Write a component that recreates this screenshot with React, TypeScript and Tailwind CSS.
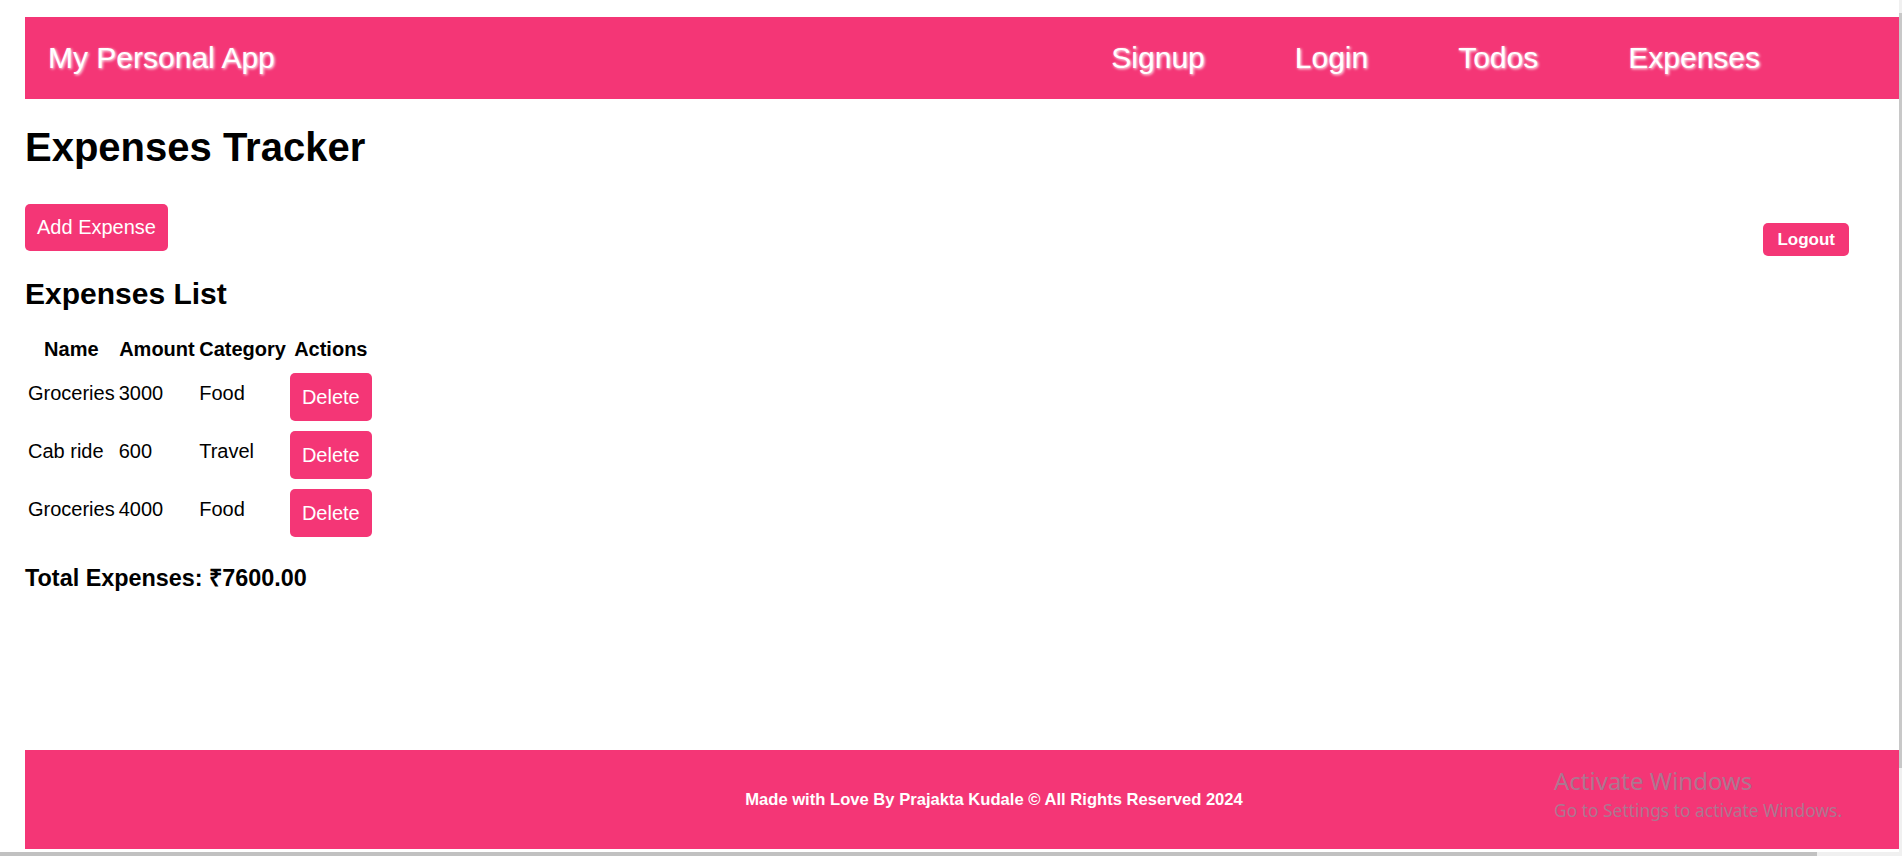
import React from "react";

const rows = [
  { name: "Groceries", amount: "3000", category: "Food" },
  { name: "Cab ride", amount: "600", category: "Travel" },
  { name: "Groceries", amount: "4000", category: "Food" },
];

export default function App() {
  return (
    <div className="relative h-[856px] w-full overflow-hidden bg-white font-['Liberation_Sans',Arial,sans-serif] text-[20px] text-black">
      <div className="pl-[25px] pr-[3px] pt-[17px]">
        <header className="flex h-[82px] items-center bg-[#f43676] pl-[23px] pr-[139px] text-white [text-shadow:1px_1px_3px_#ffffff]">
          <span className="text-[30px] leading-[34px]">My Personal App</span>
          <nav className="ml-auto flex gap-[90px] text-[30px] leading-[34px]">
            <a>Signup</a>
            <a>Login</a>
            <a>Todos</a>
            <a>Expenses</a>
          </nav>
        </header>

        <main className="pr-[50px]">
          <h1 className="mt-[25px] text-[40px] font-bold leading-[46px]">Expenses Tracker</h1>
          <div className="mt-[34px] flex h-[47px] items-start justify-between">
            <button className="rounded-[5px] bg-[#f43676] px-[12px] py-[12px] text-[20px] leading-[23px] text-white">
              Add Expense
            </button>
            <button className="mt-[19px] rounded-[5px] bg-[#f43676] px-[14px] py-[7px] text-[17px] font-bold leading-[19px] text-white">
              Logout
            </button>
          </div>

          <h2 className="mt-[26px] text-[30px] font-bold leading-[34px]">Expenses List</h2>

          <table className="mt-[24px] border-separate border-spacing-[2px]">
            <thead>
              <tr>
                <th className="px-[1px] pt-[1px] pb-[6px] text-center font-bold leading-[23px]">Name</th>
                <th className="w-[78.5px] px-[1px] pt-[1px] pb-[6px] text-center font-bold leading-[23px]">Amount</th>
                <th className="px-[1px] pt-[1px] pb-[6px] text-center font-bold leading-[23px]">Category</th>
                <th className="px-[1px] pt-[1px] pb-[6px] text-center font-bold leading-[23px]">Actions</th>
              </tr>
            </thead>
            <tbody>
              {rows.map((r, i) => (
                <tr key={i}>
                  <td className="px-[1px] pt-[13px] text-left align-top leading-[23px]">{r.name}</td>
                  <td className="px-[1px] pt-[13px] text-left align-top leading-[23px]">{r.amount}</td>
                  <td className="px-[1px] pt-[13px] text-left align-top leading-[23px]">{r.category}</td>
                  <td className="px-[1px] py-[4px] align-top">
                    <button className="block rounded-[5px] bg-[#f43676] px-[12px] py-[12px] text-[20px] leading-[24px] text-white">
                      Delete
                    </button>
                  </td>
                </tr>
              ))}
            </tbody>
          </table>

          <h3 className="mt-[22px] text-[23.4px] font-bold leading-[27px]">Total Expenses: ₹7600.00</h3>
        </main>

        <footer className="mt-[158px] flex h-[99px] items-center justify-center bg-[#f43676] pl-[64px] text-[16.6px] font-bold leading-[19px] text-white">
          Made with Love By Prajakta Kudale © All Rights Reserved 2024
        </footer>
      </div>

      {/* Windows activation watermark */}
      <div className="pointer-events-none absolute left-[1554px] top-[767px] font-['Noto_Sans',sans-serif] text-[#ad7690]">
        <div className="text-[24px] leading-[28px]">Activate Windows</div>
        <div className="mt-[4px] text-[17.4px] leading-[23px]">Go to Settings to activate Windows.</div>
      </div>

      {/* browser scrollbars */}
      <div className="absolute right-0 top-0 flex h-[852px] w-[3px] flex-col bg-[#f0f0f0]">
        <div className="mt-[13px] h-[755px] w-full bg-[#c8c8c8]" />
      </div>
      <div className="absolute bottom-0 left-0 flex h-[4px] w-full bg-[#f0f0f0]">
        <div className="h-full w-[1817px] bg-[#c1c1c1]" />
      </div>
    </div>
  );
}
